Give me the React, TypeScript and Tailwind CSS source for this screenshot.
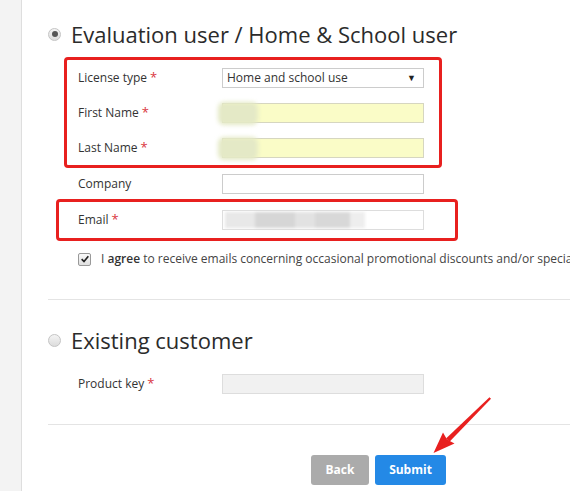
import React from 'react'

const Radio = ({ checked }: { checked?: boolean }) => (
  <div className="flex h-[13px] w-[13px] items-center justify-center rounded-full border border-[#c4c4c4] bg-gradient-to-b from-[#f4f4f4] to-[#dcdcdc]">
    {checked && <div className="h-[6px] w-[6px] rounded-full bg-[#555]" />}
  </div>
)

const Req = () => <span className="ml-[3px] text-[13px] text-[#d9363e]">*</span>

function Row({ label, required, children, h = 'h-[35px]' }: { label: string; required?: boolean; children?: React.ReactNode; h?: string }) {
  return (
    <div className={`flex items-center ${h}`}>
      <div className="w-[144px] shrink-0 text-[12px] text-[#333]">
        {label}
        {required && <Req />}
      </div>
      {children}
    </div>
  )
}

const BlurBlob = () => (
  <div className="absolute left-[-5px] top-[-2px] h-[23px] w-[40px] rounded-[6px] bg-[#e4e9c6] blur-[2px]" />
)

export default function App() {
  return (
    <div className="relative flex h-[491px] w-[570px] overflow-hidden bg-white font-['Open_Sans',sans-serif]">
      {/* left rail */}
      <div className="w-[22px] shrink-0 border-r border-[#dedede] bg-[#f3f3f3]" />

      <div className="flex-1 pl-[26px]">
        {/* Section 1 */}
        <div className="mt-[19px] flex h-[30px] items-center">
          <Radio checked />
          <h2 className="ml-[10px] text-[22px] leading-[30px] text-[#2b2b2b]">Evaluation user / Home &amp; School user</h2>
        </div>

        <div className="ml-[16px] mt-[8px] w-[378px] rounded-[4px] border-[3px] border-[#e8201f] pl-[11px]">
          <Row label="License type" required>
            <div className="flex h-[20px] w-[202px] items-center justify-between border border-[#ccc] bg-white pl-[4px] pr-[7px] text-[12px] text-[#333]">
              <span>Home and school use</span>
              <span className="text-[9px] text-[#222]">▼</span>
            </div>
          </Row>
          <Row label="First Name" required>
            <div className="relative h-[20px] w-[202px] border border-[#d6d6c0] bg-[#fafcc7]">
              <BlurBlob />
            </div>
          </Row>
          <Row label="Last Name" required>
            <div className="relative h-[20px] w-[202px] border border-[#d6d6c0] bg-[#fafcc7]">
              <BlurBlob />
            </div>
          </Row>
        </div>

        <div className="pl-[30px]">
          <Row label="Company" h="h-[31px]">
            <div className="h-[20px] w-[202px] border border-[#ccc] bg-white" />
          </Row>
        </div>

        <div className="ml-[8px] flex h-[42px] w-[402px] items-center rounded-[4px] border-[3px] border-[#e8201f] pl-[19px]">
          <Row label="Email" required>
            <div className="relative h-[20px] w-[202px] border border-[#ddd] bg-white">
              <div className="absolute left-[2px] top-[1px] flex h-[16px] blur-[1.5px]">
                <div className="w-[30px] bg-[#e8e8e8]" />
                <div className="w-[40px] bg-[#d6d6d6]" />
                <div className="w-[20px] bg-[#e2e2e2]" />
                <div className="w-[35px] bg-[#d8d8d8]" />
                <div className="w-[15px] bg-[#eeeeee]" />
              </div>
            </div>
          </Row>
        </div>

        <div className="flex h-[36px] items-center whitespace-nowrap pl-[30px] text-[12px] text-[#444]">
          <div className="flex h-[13px] w-[13px] shrink-0 items-center justify-center rounded-[2px] border border-[#999] bg-gradient-to-b from-[#fafafa] to-[#e0e0e0]">
            <svg viewBox="0 0 12 12" className="h-[10px] w-[10px]">
              <path d="M2 6.2 L4.8 9 L10 2.8" fill="none" stroke="#222" strokeWidth="2" />
            </svg>
          </div>
          <span className="ml-[10px]">
            I <b className="font-semibold text-[#333]">agree</b> to receive emails concerning occasional promotional discounts and/or special offers
          </span>
        </div>

        <div className="mt-[22px] h-px bg-[#e4e4e4]" />

        {/* Section 2 */}
        <div className="mt-[25px] flex h-[30px] items-center">
          <Radio />
          <h2 className="ml-[10px] text-[22px] leading-[30px] text-[#2b2b2b]">Existing customer</h2>
        </div>

        <div className="mt-[11px] pl-[30px]">
          <Row label="Product key" required>
            <div className="h-[20px] w-[202px] border border-[#ddd] bg-[#f1f1f1]" />
          </Row>
        </div>

        <div className="mt-[23px] h-px bg-[#e4e4e4]" />

        <div className="mt-[30px] flex gap-[6px] pl-[263px]">
          <button className="h-[30px] w-[58px] rounded-[3px] bg-[#ababab] text-[12px] font-bold text-white">Back</button>
          <button className="h-[30px] w-[71px] rounded-[3px] bg-[#2489e6] text-[12px] font-bold text-white">Submit</button>
        </div>
      </div>

      {/* annotation arrow */}
      <svg className="pointer-events-none absolute left-0 top-0" width="570" height="491">
        <path d="M489.5 397.2 L491 398.8 L449.5 441.8 L446 438.4 Z" fill="#e8201f" />
        <path d="M433.5 453 L443 432.5 L447 439.5 L454.5 443.5 Z" fill="#e8201f" />
      </svg>
    </div>
  )
}
